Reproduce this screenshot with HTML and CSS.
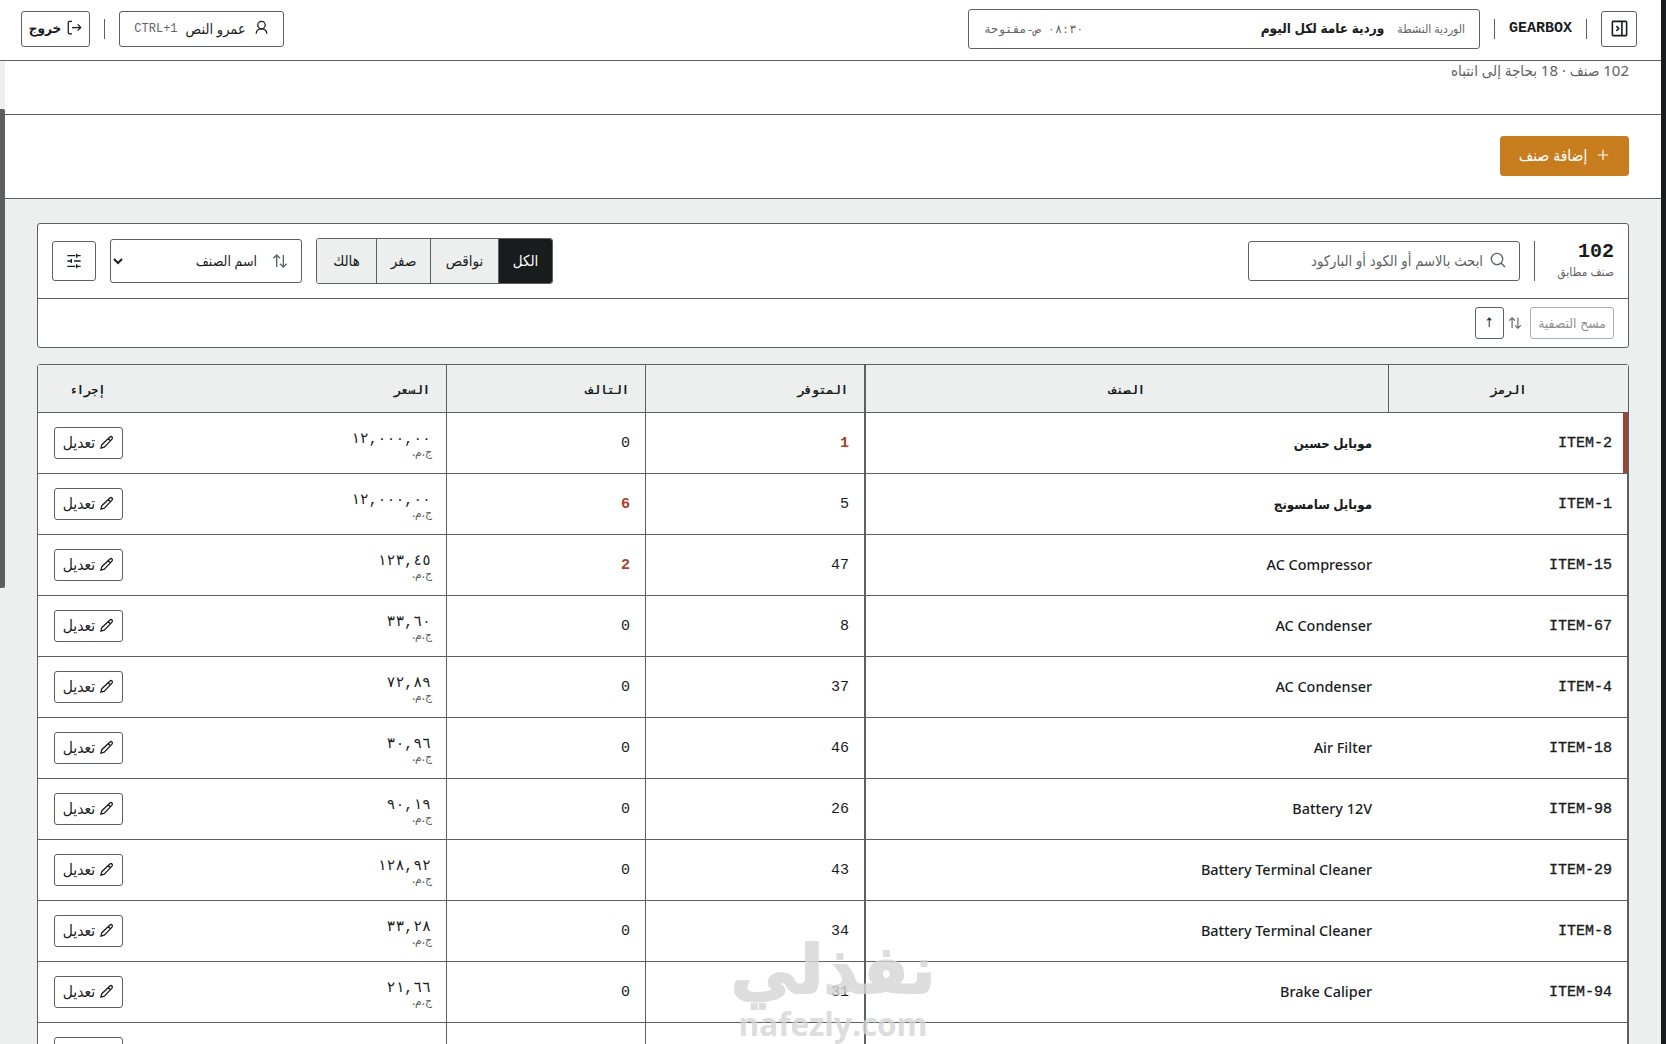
FILE: index.html
```html
<!DOCTYPE html>
<html lang="ar" dir="rtl">
<head>
  <meta charset="UTF-8">
  <meta name="viewport" content="width=device-width, initial-scale=1.0">
  <title>GEARBOX</title>
  <link rel="stylesheet" href="styles.css">
</head>
<body>
<svg class="sprite" aria-hidden="true">
  <symbol id="i-edit" viewBox="0 0 24 24"><path d="M17.5 3.2a2.1 2.1 0 0 1 3.3 3.3L8.5 19.5 3 21l1.500-5.500zM15 6l3.2 3.2"/></symbol>
  <symbol id="i-sort" viewBox="0 0 24 24"><path d="M2 8l5-5 5 5M7 3v18M22 16l-5 5-5-5M17 21V3"/></symbol>
</svg>

<div class="edge"></div>
<div class="app">
  <header class="topbar">
    <button class="btn icon-btn"><svg class="icon" viewBox="0 0 24 24"><rect x="3" y="3" width="18" height="18" rx="1"/><path d="M15 3v18M8 9l3 3-3 3"/></svg></button>
    <span class="sep"></span>
    <strong class="brand">GEARBOX</strong>
    <span class="sep"></span>
    <div class="shift">
      <span class="shift-label">الوردية النشطة</span>
      <strong class="shift-name">وردية عامة لكل اليوم</strong>
      <span class="shift-time">٠٨:٣٠ ص-مفتوحة</span>
    </div>
    <button class="btn user">
      <svg class="icon" viewBox="0 0 24 24"><circle cx="12" cy="8" r="6"/><path d="M3.500 22c0-5 3-8 8.500-8s8.500 3 8.500 8"/></svg>
      <span class="user-name">عمرو النص</span>
      <kbd>CTRL+1</kbd>
    </button>
    <span class="sep"></span>
    <button class="btn logout">
      <svg class="icon" viewBox="0 0 24 24"><path d="M8 22H4q-2 0-2-2V4q0-2 2-2h4M8 12h14M17 7l5 5-5 5"/></svg>
      <span>خروج</span>
    </button>
  </header>

  <div class="content">
    <div class="scrollbar"><div class="thumb"></div></div>
    <main>
      <div class="summary"><span>102 صنف · 18 بحاجة إلى انتباه</span></div>
      <div class="actions">
        <button class="btn add"><svg class="icon" viewBox="0 0 24 24"><path d="M12 3v18M3 12h18"/></svg><span>إضافة صنف</span></button>
      </div>

      <section class="filters">
        <div class="filter-row">
          <div class="count"><strong>102</strong><span>صنف مطابق</span></div>
          <div class="search"><svg class="icon" viewBox="0 0 24 24"><circle cx="10.500" cy="10.500" r="8.500"/><path d="M16.500 16.500l6 6"/></svg><span>ابحث بالاسم أو الكود أو الباركود</span></div>
          <div class="tabs">
            <button class="active">الكل</button><button>نواقص</button><button>صفر</button><button>هالك</button>
          </div>
          <div class="select"><svg class="icon"><use href="#i-sort"/></svg><span>اسم الصنف</span><svg class="icon chevron" viewBox="0 0 10 10"><path d="M1 3l4 4 4-4"/></svg></div>
          <button class="btn tune"><svg class="icon" viewBox="0 0 24 24"><path d="M2 4h12M16 1v6M16 4h6M2 12h6M8 9v6M12 12h10M2 20h12M16 17v6M16 20h6"/></svg></button>
        </div>
        <div class="sort-row">
          <button class="btn clear">مسح التصفية</button>
          <svg class="icon"><use href="#i-sort"/></svg>
          <button class="btn dir">↑</button>
        </div>
      </section>

      <table class="items">
        <colgroup><col class="c-code"><col class="c-name"><col class="c-stock"><col class="c-bad"><col class="c-price"><col class="c-act"></colgroup>
        <thead>
          <tr><th>الرمز</th><th>الصنف</th><th>المتوفر</th><th>التالف</th><th>السعر</th><th>إجراء</th></tr>
        </thead>
        <tbody>
          <tr class="low"><td>ITEM-2</td><td><b>موبايل حسين</b></td><td><b>1</b></td><td>0</td><td><span>١٢,٠٠٠,٠٠</span><small>ج.م.</small></td><td><button class="btn edit"><svg class="icon"><use href="#i-edit"/></svg>تعديل</button></td></tr>
          <tr><td>ITEM-1</td><td><b>موبايل سامسونج</b></td><td>5</td><td><b>6</b></td><td><span>١٢,٠٠٠,٠٠</span><small>ج.م.</small></td><td><button class="btn edit"><svg class="icon"><use href="#i-edit"/></svg>تعديل</button></td></tr>
          <tr><td>ITEM-15</td><td>AC Compressor</td><td>47</td><td><b>2</b></td><td><span>١٢٣,٤٥</span><small>ج.م.</small></td><td><button class="btn edit"><svg class="icon"><use href="#i-edit"/></svg>تعديل</button></td></tr>
          <tr><td>ITEM-67</td><td>AC Condenser</td><td>8</td><td>0</td><td><span>٣٣,٦٠</span><small>ج.م.</small></td><td><button class="btn edit"><svg class="icon"><use href="#i-edit"/></svg>تعديل</button></td></tr>
          <tr><td>ITEM-4</td><td>AC Condenser</td><td>37</td><td>0</td><td><span>٧٢,٨٩</span><small>ج.م.</small></td><td><button class="btn edit"><svg class="icon"><use href="#i-edit"/></svg>تعديل</button></td></tr>
          <tr><td>ITEM-18</td><td>Air Filter</td><td>46</td><td>0</td><td><span>٣٠,٩٦</span><small>ج.م.</small></td><td><button class="btn edit"><svg class="icon"><use href="#i-edit"/></svg>تعديل</button></td></tr>
          <tr><td>ITEM-98</td><td>Battery 12V</td><td>26</td><td>0</td><td><span>٩٠,١٩</span><small>ج.م.</small></td><td><button class="btn edit"><svg class="icon"><use href="#i-edit"/></svg>تعديل</button></td></tr>
          <tr><td>ITEM-29</td><td>Battery Terminal Cleaner</td><td>43</td><td>0</td><td><span>١٢٨,٩٢</span><small>ج.م.</small></td><td><button class="btn edit"><svg class="icon"><use href="#i-edit"/></svg>تعديل</button></td></tr>
          <tr><td>ITEM-8</td><td>Battery Terminal Cleaner</td><td>34</td><td>0</td><td><span>٣٣,٢٨</span><small>ج.م.</small></td><td><button class="btn edit"><svg class="icon"><use href="#i-edit"/></svg>تعديل</button></td></tr>
          <tr><td>ITEM-94</td><td>Brake Caliper</td><td>31</td><td>0</td><td><span>٢١,٦٦</span><small>ج.م.</small></td><td><button class="btn edit"><svg class="icon"><use href="#i-edit"/></svg>تعديل</button></td></tr>
          <tr><td></td><td></td><td></td><td></td><td></td><td><button class="btn edit"></button></td></tr>
        </tbody>
      </table>
    </main>
  </div>
</div>

<div class="watermark"><strong>نفذلي</strong><span>nafezly.com</span></div>
</body>
</html>
```
FILE: styles.css
```css
:root {
  --ink: #191c1d;
  --line: #5c6061;
  --muted: #5f6465;
  --bg: #edefee;
  --red: #a8412b;
  --sans: "Noto Sans", "DejaVu Sans Condensed", "DejaVu Sans", sans-serif;
  --mono: "Liberation Mono", "DejaVu Sans Mono", monospace;
}
* { box-sizing: border-box; }
body {
  margin: 0;
  height: 1044px;
  overflow: hidden;
  display: flex;
  background: var(--bg);
  color: var(--ink);
  font-family: var(--sans);
  font-size: 15px;
}
button { font: inherit; color: inherit; margin: 0; }
.sprite { display: none; }
.icon {
  width: 16px;
  height: 16px;
  flex: none;
  fill: none;
  stroke: currentColor;
  stroke-width: 2;
}
.edge { width: 5px; flex: none; background: #191c1d; }
.app { flex: 1; min-width: 0; display: flex; flex-direction: column; }
.btn {
  display: flex;
  align-items: center;
  justify-content: center;
  padding: 0 0 2px;
  background: #fff;
  border: 1px solid var(--line);
  border-radius: 3px;
  white-space: nowrap;
}

/* top bar */
.topbar {
  height: 61px;
  flex: none;
  display: flex;
  align-items: center;
  padding: 0 24px 3px 21px;
  background: #fff;
  border-bottom: 1px solid var(--line);
}
.icon-btn { width: 36px; height: 36px; padding: 0; }
.icon-btn .icon { width: 19px; height: 19px; }
.sep { width: 1px; height: 20px; background: var(--line); margin: 0 14px; }
.brand { font-family: var(--mono); font-size: 15px; }
.shift {
  width: 512px;
  height: 40px;
  display: flex;
  align-items: center;
  gap: 13px;
  padding: 0 14px 1px 15px;
  border: 1px solid var(--line);
  border-radius: 3px;
  white-space: nowrap;
}
.shift-label { font-size: 12px; color: var(--muted); }
.shift-name { font-size: 13.5px; }
.shift-time { margin-right: auto; font-family: var(--mono); font-size: 11.8px; color: var(--muted); padding-top: 2px; }
.user { width: 165px; height: 36px; margin-right: auto; gap: 8px; font-size: 14.5px; }
.user .icon { width: 15px; height: 15px; }
.user kbd { font-family: var(--mono); font-size: 12px; color: var(--muted); padding-top: 2px; }
.logout { width: 69px; height: 36px; gap: 6px; font-size: 13.5px; font-weight: bold; }
.logout .icon { width: 15px; height: 15px; }

/* page */
.content { flex: 1; min-height: 0; display: flex; flex-direction: row-reverse; overflow: hidden; }
.scrollbar { width: 5px; flex: none; padding-top: 48px; background: #eeeeee; }
.thumb { height: 479px; background: #5b605f; border-radius: 0 2px 2px 0; }
main { flex: 1; min-width: 0; }
.summary {
  height: 54px;
  padding: 0 32px;
  background: #fff;
  border-bottom: 1px solid var(--line);
  color: var(--muted);
  line-height: 18px;
}
.actions {
  height: 84px;
  padding: 21px 32px;
  background: #fff;
  border-bottom: 1px solid var(--line);
}
.add { width: 129px; height: 40px; gap: 9px; background: #c77d1e; border-color: #c77d1e; color: #fff; font-size: 15.5px; }
.add .icon { width: 14px; height: 14px; }

/* filters */
.filters {
  height: 125px;
  margin: 24px 32px 16px;
  background: #fff;
  border: 1px solid var(--line);
  border-radius: 3px;
}
.filter-row {
  height: 75px;
  display: flex;
  align-items: center;
  padding: 0 14px;
  border-bottom: 1px solid var(--line);
}
.count {
  height: 40px;
  width: 80px;
  border-left: 1px solid var(--line);
  display: flex;
  flex-direction: column;
  line-height: 20px;
  padding-top: 1px;
  white-space: nowrap;
}
.count strong { font-family: var(--mono); font-size: 20px; }
.count span { font-size: 12px; color: var(--muted); }
.search {
  width: 272px;
  height: 40px;
  margin-right: 14px;
  padding: 0 13px 2px;
  display: flex;
  align-items: center;
  gap: 7px;
  border: 1px solid var(--line);
  border-radius: 3px;
  color: var(--muted);
  font-size: 14.7px;
  white-space: nowrap;
}
.tabs {
  height: 46px;
  width: 237px;
  margin-right: auto;
  display: grid;
  grid-template-columns: 53px 68px 54px 1fr;
  border: 1px solid var(--line);
  border-radius: 3px;
  overflow: hidden;
}
.tabs button { padding: 0 0 2px; border: 0; border-right: 1px solid var(--line); background: var(--bg); }
.tabs .active { background: #191c1d; color: #fff; border: 0; }
.select {
  width: 192px;
  height: 44px;
  margin: 0 14px;
  padding: 0 13px 1px 2px;
  display: flex;
  align-items: center;
  gap: 15px;
  border: 1px solid var(--line);
  border-radius: 3px;
  font-size: 14px;
}
.select .icon { color: var(--muted); }
.select .chevron { width: 10px; height: 10px; margin-right: auto; color: var(--ink); }
.tune { width: 44px; height: 40px; padding: 0; }
.sort-row { height: 48px; display: flex; align-items: center; gap: 8px; padding: 0 14px; }
.sort-row .icon { width: 14px; height: 14px; margin-left: -4px; color: var(--muted); }
.clear { width: 84px; height: 32px; font-size: 13.8px; opacity: .5; }
.dir { width: 29px; height: 32px; font-size: 13px; }

/* items table */
.items {
  width: 1592px;
  margin: 0 32px;
  table-layout: fixed;
  border-collapse: separate;
  border-spacing: 0;
  background: #fff;
  border: 1px solid var(--line);
  border-radius: 3px;
}
.c-code { width: 240px; }
.c-name { width: 524px; }
.c-stock { width: 219px; }
.c-bad { width: 199px; }
.c-price { width: 309px; }
.items th {
  height: 48px;
  padding: 3px 16px 0;
  background: var(--bg);
  border-bottom: 1px solid var(--line);
  font-family: var(--mono);
  font-size: 12px;
  text-align: right;
}
.items th:nth-child(-n+2), .items th:last-child { text-align: center; }
.items th:nth-child(1) { border-left: 1px solid var(--line); }
.items td { height: 61px; padding: 0 15px; border-bottom: 1px solid var(--line); font-size: 15px; }
.items td:nth-child(1) { padding-right: 16px; border-right: 1px solid var(--line); font-family: var(--mono); -webkit-text-stroke: .35px; direction: ltr; text-align: right; }
.items td:nth-child(2) { padding: 0 16px 2px; font-size: 14.4px; font-weight: 500; }
.items td:nth-child(3), .items td:nth-child(4), .items td:nth-child(5) { padding-top: 1px; font-family: var(--mono); }
.items td:nth-child(5) { padding: 2px 14px 0; }
.items tr > :nth-child(2) { border-left: 2px solid var(--line); }
.items tr > :nth-child(3), .items tr > :nth-child(4) { border-left: 1px solid var(--line); }
.items td b { color: var(--red); }
.items td:nth-child(2) b { color: var(--ink); font-size: 13.2px; }
.items .low td:first-child { box-shadow: inset -4px 0 var(--red); }
.items td span { display: block; padding-right: 1px; font-size: 14.8px; line-height: 14px; }
.items td small { display: block; font-family: var(--sans); font-size: 12px; line-height: 11px; color: var(--muted); }
.items td:last-child { padding-right: 14px; }
.edit { width: 69px; height: 32px; gap: 4px; font-size: 15.5px; }
.edit .icon { width: 15px; height: 15px; }

/* watermark over the page */
.watermark {
  position: absolute;
  left: 713px;
  top: 934px;
  width: 240px;
  direction: ltr;
  text-align: center;
  color: #d5d5d5;
  opacity: .8;
  font-weight: bold;
  white-space: nowrap;
}
.watermark strong { display: block; font: bold 67px/72px "DejaVu Sans", sans-serif; -webkit-text-stroke: 2px #d5d5d5; }
.watermark span { display: block; font: bold 31.5px/36px "Open Sans", sans-serif; }
```
